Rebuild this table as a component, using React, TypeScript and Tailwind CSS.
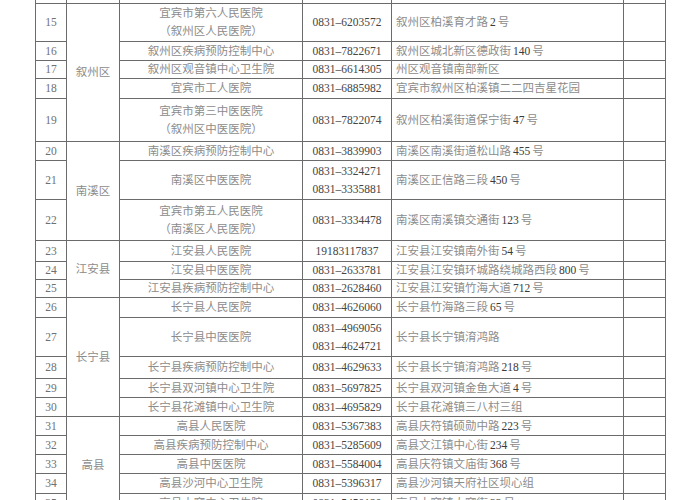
type Row = {
  no: string;
  h: string;
  name: string[];
  phone: string[];
  addr: string;
};

type Group = { district: string; rows: Row[] };

const groups: Group[] = [
  {
    district: "叙州区",
    rows: [
      { no: "15", h: "h-[38px]", name: ["宜宾市第六人民医院", "（叙州区人民医院）"], phone: ["0831–6203572"], addr: "叙州区柏溪育才路2号" },
      { no: "16", h: "h-[19px]", name: ["叙州区疾病预防控制中心"], phone: ["0831–7822671"], addr: "叙州区城北新区德政街140号" },
      { no: "17", h: "h-[18px]", name: ["叙州区观音镇中心卫生院"], phone: ["0831–6614305"], addr: "州区观音镇南部新区" },
      { no: "18", h: "h-[20px]", name: ["宜宾市工人医院"], phone: ["0831–6885982"], addr: "宜宾市叙州区柏溪镇二二四吉星花园" },
      { no: "19", h: "h-[43px]", name: ["宜宾市第三中医医院", "（叙州区中医医院）"], phone: ["0831–7822074"], addr: "叙州区柏溪街道保宁街47号" },
    ],
  },
  {
    district: "南溪区",
    rows: [
      { no: "20", h: "h-[19px]", name: ["南溪区疾病预防控制中心"], phone: ["0831–3839903"], addr: "南溪区南溪街道松山路455号" },
      { no: "21", h: "h-[39px]", name: ["南溪区中医医院"], phone: ["0831–3324271", "0831–3335881"], addr: "南溪区正信路三段450号" },
      { no: "22", h: "h-[41px]", name: ["宜宾市第五人民医院", "（南溪区人民医院）"], phone: ["0831–3334478"], addr: "南溪区南溪镇交通街123号" },
    ],
  },
  {
    district: "江安县",
    rows: [
      { no: "23", h: "h-[21px]", name: ["江安县人民医院"], phone: ["19183117837"], addr: "江安县江安镇南外街54号" },
      { no: "24", h: "h-[18px]", name: ["江安县中医医院"], phone: ["0831–2633781"], addr: "江安县江安镇环城路绕城路西段800号" },
      { no: "25", h: "h-[18px]", name: ["江安县疾病预防控制中心"], phone: ["0831–2628460"], addr: "江安县江安镇竹海大道712号" },
    ],
  },
  {
    district: "长宁县",
    rows: [
      { no: "26", h: "h-[20px]", name: ["长宁县人民医院"], phone: ["0831–4626060"], addr: "长宁县竹海路三段65号" },
      { no: "27", h: "h-[39px]", name: ["长宁县中医医院"], phone: ["0831–4969056", "0831–4624721"], addr: "长宁县长宁镇淯鸿路" },
      { no: "28", h: "h-[22px]", name: ["长宁县疾病预防控制中心"], phone: ["0831–4629633"], addr: "长宁县长宁镇淯鸿路218号" },
      { no: "29", h: "h-[19px]", name: ["长宁县双河镇中心卫生院"], phone: ["0831–5697825"], addr: "长宁县双河镇金鱼大道4号" },
      { no: "30", h: "h-[19px]", name: ["长宁县花滩镇中心卫生院"], phone: ["0831–4695829"], addr: "长宁县花滩镇三八村三组" },
    ],
  },
  {
    district: "高县",
    rows: [
      { no: "31", h: "h-[19px]", name: ["高县人民医院"], phone: ["0831–5367383"], addr: "高县庆符镇硕勋中路223号" },
      { no: "32", h: "h-[19px]", name: ["高县疾病预防控制中心"], phone: ["0831–5285609"], addr: "高县文江镇中心街234号" },
      { no: "33", h: "h-[19px]", name: ["高县中医医院"], phone: ["0831–5584004"], addr: "高县庆符镇文庙街368号" },
      { no: "34", h: "h-[20px]", name: ["高县沙河中心卫生院"], phone: ["0831–5396317"], addr: "高县沙河镇天府社区坝心组" },
      { no: "35", h: "h-[20px]", name: ["高县大窝中心卫生院"], phone: ["0831–5450120"], addr: "高县大窝镇大窝街33号" },
    ],
  },
];

const cell = "border border-[#6b6b6b] p-0 align-middle";

// digits in the address column print darker than the han characters
const Addr = ({ text }: { text: string }) => (
  <>
    {text.split(/(\d+)/).map((part, i) =>
      /^\d+$/.test(part) ? (
        <span key={i} className="text-[#3a3a3a] mx-[2px]">
          {part}
        </span>
      ) : (
        <span key={i}>{part}</span>
      )
    )}
  </>
);

export default function App() {
  return (
    <div className="w-[700px] h-[500px] overflow-hidden bg-white">
      <table
        className="ml-[35px] w-[630px] table-fixed border-collapse text-[11.5px] leading-[12px] text-[#8c8c8c]"
        style={{ fontFamily: '"Liberation Serif", "Noto Sans CJK SC", serif' }}
      >
        <colgroup>
          <col className="w-[31px]" />
          <col className="w-[53px]" />
          <col className="w-[183px]" />
          <col className="w-[89px]" />
          <col className="w-[232px]" />
          <col className="w-[42px]" />
        </colgroup>
        <tbody>
          <tr className="h-[3px]">
            <td className={`${cell} border-t-0`} />
            <td className={`${cell} border-t-0`} />
            <td className={`${cell} border-t-0`} />
            <td className={`${cell} border-t-0`} />
            <td className={`${cell} border-t-0`} />
            <td className={`${cell} border-t-0`} />
          </tr>
          {groups.map((g) =>
            g.rows.map((r, i) => (
              <tr key={r.no} className={r.h}>
                <td className={`${cell} text-center text-[#707070]`}>{r.no}</td>
                {i === 0 && (
                  <td rowSpan={g.rows.length} className={`${cell} text-center`}>
                    {g.district}
                  </td>
                )}
                <td className={`${cell} text-center`}>
                  {r.name.map((n) => (
                    <div key={n} className={r.name.length > 1 ? "leading-[18px]" : ""}>
                      {n}
                    </div>
                  ))}
                </td>
                <td className={`${cell} text-center text-[#444444]`}>
                  {r.phone.map((p) => (
                    <div key={p} className={r.phone.length > 1 ? "leading-[18px]" : ""}>
                      {p}
                    </div>
                  ))}
                </td>
                <td className={`${cell} pl-[4px] whitespace-nowrap`}>
                  <Addr text={r.addr} />
                </td>
                <td className={cell} />
              </tr>
            ))
          )}
        </tbody>
      </table>
    </div>
  );
}
